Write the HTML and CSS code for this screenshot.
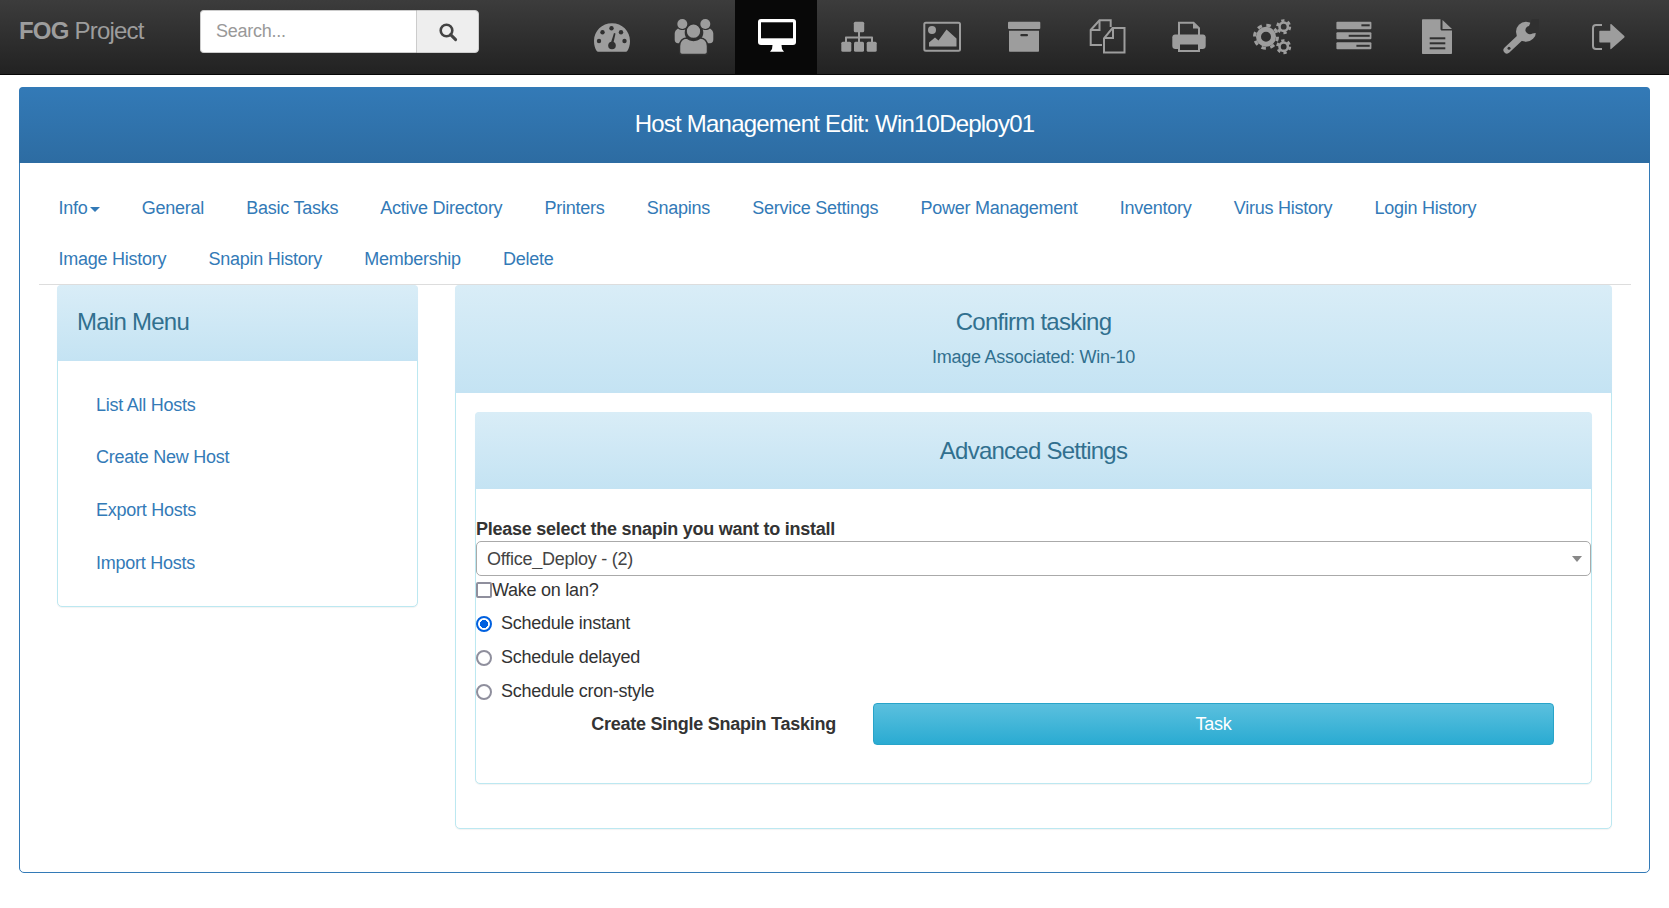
FILE: index.html
```html
<!DOCTYPE html>
<html lang="en">
  <head>
    <meta charset="UTF-8" />
    <meta name="viewport" content="width=device-width, initial-scale=1.0" />
    <title>Host Management Edit</title>
    <link rel="stylesheet" href="styles.css">
  </head>
  <body>
    <header class="topbar">
      <a class="brand" href="#"><b>FOG</b> Project</a>
      <form class="search">
        <input class="search-input" type="text" placeholder="Search...">
        <button class="search-btn" type="button">
          <svg width="20" height="20" viewBox="0 0 20 20"><circle cx="8.500" cy="8.500" r="5.800" fill="none" stroke="#444" stroke-width="2.600"/><path d="M12.600 12.600l5 5" stroke="#444" stroke-width="3" stroke-linecap="round"/></svg>
        </button>
      </form>
      <nav class="icons">
        <a href="#"><svg viewBox="0 0 40 40"><path d="M20 6.300C10 6.300 2 14 2 24c0 4 1 7.500 2.700 10 .3.500.8.700 1.300.7h28c.5 0 1-.2 1.300-.7 1.700-2.500 2.700-6 2.700-10 0-10-8-17.700-18-17.700z"/><g class="cut"><circle cx="19.500" cy="11.300" r="2.200"/><circle cx="10.500" cy="15.300" r="2.200"/><circle cx="29" cy="15.300" r="2.200"/><circle cx="7" cy="24" r="2.200"/><circle cx="32.500" cy="24" r="2.200"/><circle cx="20" cy="28.500" r="3.800"/><path d="M18.500 27l3.500-11 1.500.4-2.500 11.600z"/></g></svg></a>
        <a href="#"><svg viewBox="0 0 40 40"><circle cx="8.300" cy="7" r="5"/><circle cx="31.300" cy="7" r="5"/><path d="M.7 16.500c0-2.200 1.600-4 3.300-5 1.300 1 2.800 1.500 4.300 1.500 1 0 2-.2 3-.6-.4 1-.6 2-.6 3 0 2.600 1 5 2.800 6.800-2.500.8-4.500 2.200-5.800 4H4c-2 0-3.300-1.500-3.300-3.500z"/><path d="M39.300 16.500c0-2.200-1.600-4-3.300-5-1.300 1-2.800 1.500-4.300 1.500-1 0-2-.2-3-.6.4 1 .6 2 .6 3 0 2.600-1 5-2.800 6.800 2.500.8 4.500 2.200 5.800 4H36c2 0 3.300-1.500 3.300-3.500z"/><circle cx="19.500" cy="14.200" r="7.400" class="ring"/><path class="ring" d="M8 37.500c-1.500 0-2.500-1-2.500-2.500v-6c0-4.500 3-8 7-8 2 1.500 4.500 2.500 7 2.500s5-1 7-2.500c4 0 7 3.500 7 8v6c0 1.500-1 2.500-2.500 2.500z"/></svg></a>
        <a class="active" href="#"><svg viewBox="0 0 40 40"><rect x="1" y="2" width="38" height="26" rx="3"/><rect class="hole" x="4" y="5.300" width="32" height="16"/><path d="M15.500 28h9l.5 4 2 2.700H13l2-2.700z"/></svg></a>
        <a href="#"><svg viewBox="0 0 40 40"><rect x="14.800" y="4.700" width="10.400" height="10.600" rx="1.500"/><path d="M19 15h2v4.500h12c.6 0 1 .4 1 1V25h-2v-3.500H21V25h-2v-3.500H8V25H6v-4.500c0-.6.4-1 1-1h12z"/><rect x="2.300" y="24.700" width="10" height="10" rx="1.500"/><rect x="15" y="24.700" width="10" height="10" rx="1.500"/><rect x="27.700" y="24.700" width="10" height="10" rx="1.500"/></svg></a>
        <a href="#"><svg viewBox="0 0 40 40"><rect class="line" x="2.300" y="5.700" width="35.700" height="28" rx="1.500"/><circle cx="10" cy="13" r="4"/><path d="M7 29.500v-4l6-5 3.500 3 8-11 10 9v8z"/></svg></a>
        <a href="#"><svg viewBox="0 0 40 40"><rect x="4" y="4.700" width="32.300" height="7.300" rx="1"/><path d="M5 13.700h30v20c0 .6-.4 1-1 1H6c-.6 0-1-.4-1-1z"/><rect class="cut" x="16.300" y="17" width="7.700" height="2.200" rx="1"/></svg></a>
        <a href="#"><svg viewBox="0 0 40 40"><path class="line" d="M15 28H3.700V13L12.500 3.300h11.200V10"/><path class="line" d="M12.500 4v9H4"/><path class="line" d="M17 35.500V21.300l8.500-10.200h12v24.400z"/><path class="line" d="M26 11.500v9.500h-9"/></svg></a>
        <a href="#"><svg viewBox="0 0 40 40"><path class="line" d="M10 18V5.700h14.500l5.500 5.500V18"/><path d="M24 5v6.500h6z"/><path d="M6 17.500h28c1.500 0 2.700 1.200 2.700 2.700V29c0 1.700-1.300 3-3 3H6.300c-1.700 0-3-1.300-3-3v-8.800c0-1.500 1.200-2.700 2.700-2.700z"/><path class="line paper" d="M10 26.500h20v7.500H10z"/></svg></a>
        <a href="#"><svg viewBox="0 0 40 40"><g class="gear"><circle cx="14" cy="19.700" r="7.500" class="big"/><circle cx="14" cy="19.700" r="11.500" class="teeth"/></g><g class="gear"><circle cx="31.700" cy="9.700" r="4.200" class="small"/><circle cx="31.700" cy="9.700" r="6.200" class="small-teeth"/></g><g class="gear"><circle cx="31.700" cy="29.700" r="4.200" class="small"/><circle cx="31.700" cy="29.700" r="6.200" class="small-teeth"/></g></svg></a>
        <a href="#"><svg viewBox="0 0 40 40"><rect x="2.400" y="4.700" width="35" height="7.600" rx="1"/><rect x="2.400" y="15.300" width="35" height="7" rx="1"/><rect x="2.400" y="25.300" width="35" height="7" rx="1"/><rect class="cut" x="27.400" y="7.300" width="8.300" height="2"/><rect class="cut" x="14.700" y="17.800" width="21" height="2"/><rect class="cut" x="22.400" y="27.800" width="13.300" height="2"/></svg></a>
        <a href="#"><svg viewBox="0 0 40 40"><path d="M6 2.300h17.500V12c0 .8.500 1.500 1.500 1.500h10V36c0 .6-.4 1-1 1H6c-.6 0-1-.4-1-1V3.300c0-.6.4-1 1-1z"/><path d="M25.500 3l9.500 9H25.500z"/><rect class="cut" x="12.700" y="20.300" width="15.600" height="2"/><rect class="cut" x="12.700" y="25.300" width="15.600" height="2"/><rect class="cut" x="12.700" y="30.300" width="15.600" height="2"/></svg></a>
        <a href="#"><svg viewBox="0 0 40 40"><circle cx="27" cy="14.700" r="10"/><path d="M8 33l16-15" stroke="#9d9d9d" stroke-width="7" stroke-linecap="round"/><path class="cut" d="M26.500 14c-.5-2 1-4.500 3.500-5L33 2h8v14h-4.500l-3 .5c-2.500 1.500-6 .5-7-2.500z"/><circle class="cut" cx="10" cy="31.300" r="1.500"/></svg></a>
        <a href="#"><svg viewBox="0 0 40 40"><path class="line" d="M14 8H8c-1.700 0-3 1.300-3 3v18c0 1.700 1.300 3 3 3h6"/><path d="M12.300 13.700h10V7.500c0-.5.500-.7.900-.4L36.300 19c.4.400.4 1 0 1.400L23.200 32.100c-.4.300-.9.100-.9-.4v-6.200h-10c-.6 0-1-.4-1-1v-9.800c0-.6.4-1 1-1z"/></svg></a>
      </nav>
    </header>

    <main class="panel-main">
      <h1 class="main-head">Host Management Edit: Win10Deploy01</h1>
      <div class="main-body">
        <ul class="tabs">
          <li><a href="#">Info<span class="caret"></span></a></li>
          <li><a href="#">General</a></li>
          <li><a href="#">Basic Tasks</a></li>
          <li><a href="#">Active Directory</a></li>
          <li><a href="#">Printers</a></li>
          <li><a href="#">Snapins</a></li>
          <li><a href="#">Service Settings</a></li>
          <li><a href="#">Power Management</a></li>
          <li><a href="#">Inventory</a></li>
          <li><a href="#">Virus History</a></li>
          <li><a href="#">Login History</a></li>
          <li><a href="#">Image History</a></li>
          <li><a href="#">Snapin History</a></li>
          <li><a href="#">Membership</a></li>
          <li><a href="#">Delete</a></li>
        </ul>
        <div class="columns">
          <aside class="panel side">
            <h2 class="panel-head left">Main Menu</h2>
            <ul class="side-list">
              <li><a href="#">List All Hosts</a></li>
              <li><a href="#">Create New Host</a></li>
              <li><a href="#">Export Hosts</a></li>
              <li><a href="#">Import Hosts</a></li>
            </ul>
          </aside>
          <section class="panel content">
            <div class="panel-head confirm">
              <h2>Confirm tasking</h2>
              <p>Image Associated: Win-10</p>
            </div>
            <div class="content-body">
              <div class="panel inner">
                <h2 class="panel-head inner-head">Advanced Settings</h2>
                <form class="task-form">
                  <label class="snapin-label" for="snapin">Please select the snapin you want to install</label>
                  <div class="snapin-wrap">
                    <select class="snapin" id="snapin">
                      <option>Office_Deploy - (2)</option>
                    </select>
                  </div>
                  <label class="check-row"><input type="checkbox">Wake on lan?</label>
                  <label class="radio-row"><input type="radio" name="when" checked>Schedule instant</label>
                  <label class="radio-row"><input type="radio" name="when">Schedule delayed</label>
                  <label class="radio-row"><input type="radio" name="when">Schedule cron-style</label>
                  <div class="task-row">
                    <span class="task-label">Create Single Snapin Tasking</span>
                    <button class="task-btn" type="button">Task</button>
                  </div>
                </form>
              </div>
            </div>
          </section>
        </div>
      </div>
    </main>
  </body>
</html>
```

FILE: styles.css
```css
* {
  box-sizing: border-box;
}
body {
  margin: 0;
  padding: 0;
  background: #fff;
  font-family: "Liberation Sans", Arial, sans-serif;
  font-size: 18px;
  line-height: 1.42857;
  letter-spacing: -0.25px;
  color: #333;
}
a {
  text-decoration: none;
  color: #337ab7;
}
h1,
h2,
p,
ul {
  margin: 0;
  padding: 0;
  font-weight: normal;
}
ul {
  list-style: none;
}

/* top bar */
.topbar {
  display: flex;
  align-items: center;
  height: 75px;
  background: linear-gradient(to bottom, #3c3c3c, #222);
  border-bottom: 1px solid #080808;
}
.brand {
  width: 181px;
  margin: -12px 0 0 19px;
  font-size: 24px;
  letter-spacing: -0.8px;
  color: #9d9d9d;
}
.search {
  display: flex;
  width: 279px;
  height: 43px;
  margin-top: -11px;
}
.search-input {
  flex: 1;
  min-width: 0;
  height: 100%;
  padding: 6px 15px;
  border: 1px solid #ccc;
  border-right: 0;
  border-radius: 4px 0 0 4px;
  font: 18px "Liberation Sans", Arial, sans-serif;
  letter-spacing: -0.25px;
  color: #555;
  background: #fff;
  outline: none;
}
.search-input::placeholder {
  color: #999;
}
.search-btn {
  width: 63px;
  height: 100%;
  padding: 3px 0 0;
  border: 1px solid #ccc;
  border-radius: 0 4px 4px 0;
  background: #eee;
}
.icons {
  display: flex;
  margin-left: 90.5px;
}
.icons a {
  display: flex;
  align-items: center;
  justify-content: center;
  width: 82.5px;
  height: 74px;
  padding-left: 2px;
}
.icons a:last-child {
  margin-left: 6px;
}
.icons a.active {
  background: #080808;
}
.icons svg {
  width: 40px;
  height: 40px;
  fill: #9d9d9d;
}
.icons a.active svg {
  fill: #fff;
}
.icons .cut {
  fill: #303030;
}
.icons .hole {
  fill: #080808;
}
.icons .ring {
  stroke: #303030;
  stroke-width: 1.5;
}
.icons .line {
  fill: none;
  stroke: #9d9d9d;
  stroke-width: 2;
}
.icons .paper {
  fill: #2a2a2a;
}
.gear circle {
  fill: none;
  stroke: #9d9d9d;
}
.gear .big {
  stroke-width: 5;
}
.gear .teeth {
  stroke-width: 3;
  stroke-dasharray: 4.52 4.51;
}
.gear .small {
  stroke-width: 2.6;
}
.gear .small-teeth {
  stroke-width: 2.6;
  stroke-dasharray: 3.25 3.25;
}

/* main panel */
.panel-main {
  width: 1631px;
  height: 786px;
  margin: 12px 0 0 19px;
  border: 1px solid #337ab7;
  border-radius: 5px;
}
.main-head {
  height: 76px;
  margin: -1px -1px 0;
  border-radius: 4px 4px 0 0;
  background: linear-gradient(to bottom, #337ab7, #2d6ca2);
  color: #fff;
  font-size: 24px;
  letter-spacing: -0.78px;
  line-height: 74px;
  text-align: center;
}
.main-body {
  padding: 19px 18px 0 19px;
}
.tabs {
  display: flex;
  flex-wrap: wrap;
  border-bottom: 1px solid #ddd;
}
.tabs a {
  display: block;
  padding: 2px 22.7px 0 19.5px;
  line-height: 49px;
}
.caret {
  display: inline-block;
  margin-left: 2px;
  vertical-align: middle;
  border-top: 5px solid #337ab7;
  border-left: 5px solid transparent;
  border-right: 5px solid transparent;
}
.columns {
  display: flex;
  align-items: flex-start;
  gap: 37px;
  padding: 0 19px 0 18px;
}
.panel {
  border: 1px solid #bce8f1;
  border-radius: 5px;
  background: #fff;
  box-shadow: 0 1px 1px rgba(0, 0, 0, 0.05);
}
.panel-head {
  height: 76px;
  margin: -1px -1px 0;
  border-radius: 4px 4px 0 0;
  background: linear-gradient(to bottom, #d9edf7, #c4e3f3);
  color: #31708f;
  text-align: center;
  font-size: 24px;
  letter-spacing: -0.75px;
  line-height: 74px;
}
.panel-head.left {
  padding-left: 20px;
  text-align: left;
}
.side {
  width: 361px;
  height: 322px;
}
.side-list {
  padding: 18px 38px;
}
.side-list a {
  display: block;
  padding: 13.5px 0;
}
.content {
  width: 1157px;
  height: 544px;
}
.panel-head.confirm {
  height: 108px;
  padding-top: 20px;
  line-height: 1.42857;
}
.confirm h2 {
  font-size: 24px;
}
.confirm p {
  margin-top: 6px;
  font-size: 18px;
  letter-spacing: -0.25px;
}
.content-body {
  padding: 19px 19px 0;
}
.inner {
  height: 372px;
}
.inner-head {
  height: 77px;
  line-height: 77px;
}
.task-form {
  display: flex;
  flex-direction: column;
  align-items: flex-start;
  padding-top: 28px;
}
.snapin-label {
  margin-bottom: -2px;
  font-weight: bold;
}
.snapin-wrap {
  position: relative;
  width: 100%;
}
.snapin-wrap::after {
  content: "";
  position: absolute;
  top: 15px;
  right: 9px;
  border-top: 6px solid #888;
  border-left: 5px solid transparent;
  border-right: 5px solid transparent;
}
.snapin {
  display: block;
  width: 100%;
  height: 35px;
  padding: 2px 10px 0;
  border: 1px solid #aaa;
  border-radius: 5px;
  font: 18px "Liberation Sans", Arial, sans-serif;
  letter-spacing: -0.25px;
  color: #444;
  background: #fff;
  appearance: none;
}
.check-row,
.radio-row {
  display: flex;
  align-items: center;
  height: 26px;
}
.check-row {
  margin-top: 2px;
}
.check-row input {
  width: 16px;
  height: 16px;
  margin: -1px 0 0;
  border: 2px solid #8f8f9d;
  border-radius: 2px;
  background: #fff;
  appearance: none;
}
.radio-row {
  margin-top: 7px;
}
.radio-row + .radio-row {
  margin-top: 8px;
}
.radio-row input {
  width: 16px;
  height: 16px;
  margin: 1px 9px 0 0;
  border: 2px solid #8f8f9d;
  border-radius: 50%;
  background: #fff;
  appearance: none;
}
.radio-row input:checked {
  border-color: #0060df;
  background: radial-gradient(circle, #0060df 0, #0060df 3.8px, #fff 4.3px);
}
.task-row {
  display: flex;
  align-items: center;
  width: 100%;
  height: 42px;
  margin-top: -2px;
}
.task-label {
  width: 360px;
  padding-top: 2px;
  font-weight: bold;
  text-align: right;
}
.task-btn {
  width: 681px;
  height: 42px;
  margin-left: 37px;
  padding-top: 2px;
  border: 1px solid #28a4c9;
  border-radius: 4px;
  background: linear-gradient(to bottom, #5bc0de, #2aabd2);
  color: #fff;
  font: 18px "Liberation Sans", Arial, sans-serif;
  letter-spacing: -0.25px;
}
```
